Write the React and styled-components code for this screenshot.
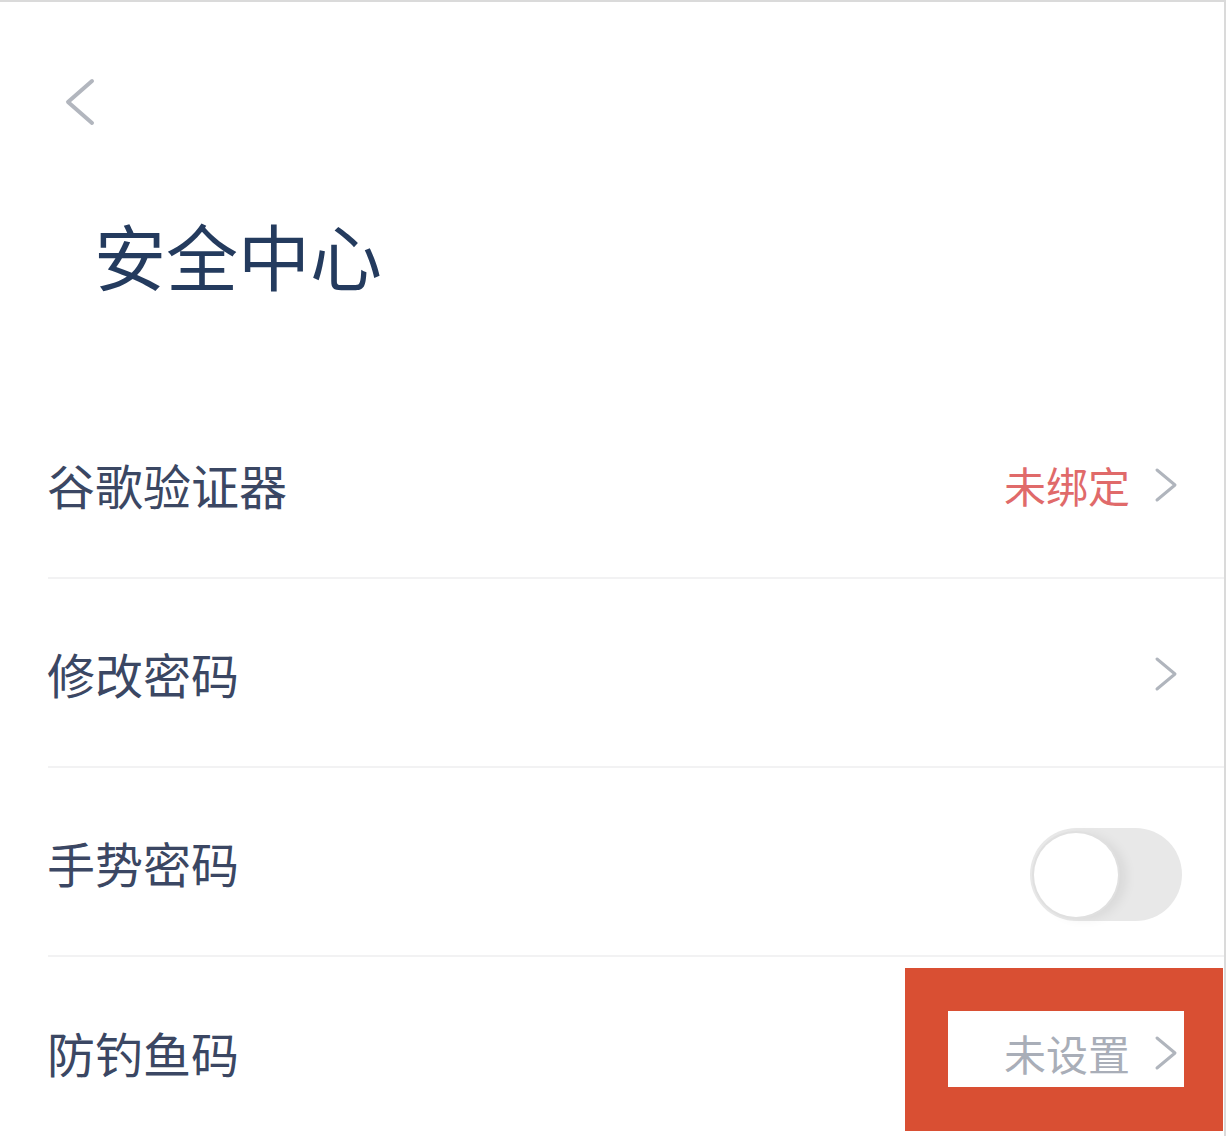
import React from "react";
import styled, { createGlobalStyle } from "styled-components";

const Global = createGlobalStyle`
  html, body { margin: 0; padding: 0; background: #fff; }
  body { font-family: "Noto Sans CJK SC", "Noto Sans", sans-serif; }
  * { box-sizing: border-box; }
`;

const Page = styled.div`
  position: relative;
  width: 1226px;
  height: 1136px;
  overflow: hidden;
  background: #fff;
  border-top: 2px solid #dadada;
  border-right: 2px solid #dadada;
`;

const Header = styled.header`
  height: 388px;
  display: flex;
  flex-direction: column;
  padding: 74px 0 0 62px;
`;

const BackButton = styled.button`
  width: 36px;
  height: 52px;
  padding: 0;
  border: 0;
  background: none;
  display: flex;
  align-items: center;
  justify-content: center;
  cursor: pointer;
`;

const Title = styled.h1`
  margin: 81px 0 0 32px;
  font-size: 72px;
  font-weight: 400;
  line-height: 90px;
  color: #243b5e;
  letter-spacing: 0;
`;

const List = styled.ul`
  list-style: none;
  margin: 0;
  padding: 0 0 0 48px;
`;

const Row = styled.li`
  height: 189px;
  display: flex;
  align-items: center;
  justify-content: space-between;
  padding-right: 46px;
  border-bottom: ${(p) => (p.$last ? "none" : "2px solid #f2f2f3")};
`;

const Label = styled.span`
  font-size: 48px;
  line-height: 60px;
  color: #3b4763;
  margin-left: -1px;
  margin-top: 0;
`;

const Trail = styled.div`
  display: flex;
  align-items: center;
  gap: 24px;
  margin-top: 2px;
`;

const Status = styled.span`
  font-size: 42px;
  line-height: 52px;
  color: ${(p) => (p.$tone === "warn" ? "#e06a6a" : "#a9aeb8")};
`;

const Toggle = styled.div`
  width: 152px;
  height: 93px;
  border-radius: 47px;
  background: #e8e8e8;
  display: flex;
  align-items: center;
  padding-left: 4px;
  margin-right: -4px;
  margin-top: 24px;
`;

const Knob = styled.div`
  width: 84px;
  height: 84px;
  border-radius: 50%;
  background: #fff;
  box-shadow: 0 0 0 2px #e0e0e0, 8px 2px 12px rgba(0, 0, 0, 0.07);
`;

const Highlight = styled.div`
  position: absolute;
  left: 905px;
  top: 966px;
  width: 318px;
  height: 163px;
  border-style: solid;
  border-color: #d94f33;
  border-width: 43px 39px 44px 43px;
  pointer-events: none;
`;

const Chevron = ({ dir = "right", color = "#b0b5bd", w = 24, h = 36, sw = 3 }) => (
  <svg width={w} height={h} viewBox={`0 0 ${w} ${h}`} fill="none">
    {dir === "right" ? (
      <polyline
        points={`${sw},${sw} ${w - sw},${h / 2} ${sw},${h - sw}`}
        stroke={color}
        strokeWidth={sw}
        strokeLinecap="round"
        strokeLinejoin="round"
      />
    ) : (
      <polyline
        points={`${w - sw},${sw} ${sw},${h / 2} ${w - sw},${h - sw}`}
        stroke={color}
        strokeWidth={sw}
        strokeLinecap="round"
        strokeLinejoin="round"
      />
    )}
  </svg>
);

const rows = [
  { label: "谷歌验证器", status: "未绑定", tone: "warn", arrow: true },
  { label: "修改密码", arrow: true },
  { label: "手势密码", toggle: true },
  { label: "防钓鱼码", status: "未设置", tone: "muted", arrow: true },
];

export default function App() {
  return (
    <>
      <Global />
      <Page>
        <Header>
          <BackButton aria-label="返回">
            <Chevron dir="left" color="#b2b6be" w={32} h={50} sw={4} />
          </BackButton>
          <Title>安全中心</Title>
        </Header>
        <List>
          {rows.map((r, i) => (
            <Row key={r.label} $last={i === rows.length - 1}>
              <Label>{r.label}</Label>
              <Trail>
                {r.status && <Status $tone={r.tone}>{r.status}</Status>}
                {r.arrow && <Chevron />}
                {r.toggle && (
                  <Toggle>
                    <Knob />
                  </Toggle>
                )}
              </Trail>
            </Row>
          ))}
        </List>
        <Highlight />
      </Page>
    </>
  );
}
